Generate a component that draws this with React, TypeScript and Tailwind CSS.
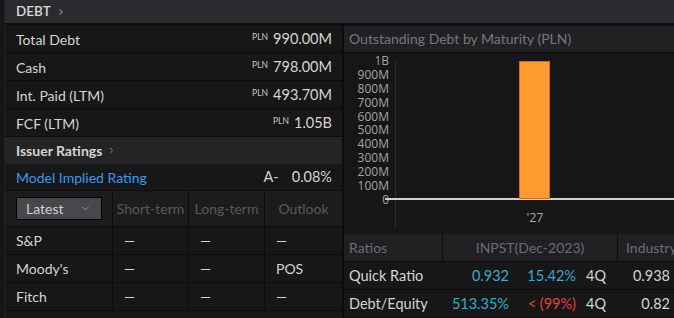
import { ChevronRight, ChevronDown } from 'lucide-react';

const font = { fontFamily: 'Lato, "Open Sans", sans-serif' };

const summary = [
  { label: 'Total Debt', value: '990.00M' },
  { label: 'Cash', value: '798.00M' },
  { label: 'Int. Paid (LTM)', value: '493.70M' },
  { label: 'FCF (LTM)', value: '1.05B' },
];

const ratings = [
  { agency: 'S&P', short: '—', long: '—', outlook: '—' },
  { agency: "Moody's", short: '—', long: '—', outlook: 'POS' },
  { agency: 'Fitch', short: '—', long: '—', outlook: '—' },
];

const ticks = ['1B', '900M', '800M', '700M', '600M', '500M', '400M', '300M', '200M', '100M', '0'];

export default function App() {
  return (
    <div
      className="w-[674px] h-[318px] overflow-hidden flex bg-[#0d0d0d] text-[#d4d4d4] text-[14px]"
      style={font}
    >
      {/* left rail */}
      <div className="w-[5px] flex-shrink-0 bg-[#161616] border-r border-[#222]" />

      <div className="flex-1 flex flex-col min-w-0">
        {/* Header */}
        <div className="h-[24px] flex-shrink-0 bg-[#2b2b2f] flex items-center pl-[11px] gap-[5px] border-b border-[#0d0d0d]">
          <span className="text-[13.5px] font-semibold text-[#d8d8d8]">DEBT</span>
          <ChevronRight size={10} className="text-[#9a9a9a]" strokeWidth={2.5} />
        </div>

        <div className="flex-1 flex gap-[2px] mt-px min-h-0">
          {/* Left panel */}
          <div className="w-[337px] flex-shrink-0 flex flex-col bg-[#171717]">
            {summary.map((r) => (
              <div
                key={r.label}
                className="h-[28px] flex items-center justify-between pl-[11px] pr-[10px] border-b border-[#0d0d0d] pt-px"
              >
                <span>{r.label}</span>
                <span className="flex items-baseline gap-[5px]">
                  <span className="text-[8.5px] text-[#c8c8c8] relative top-[-4px]">PLN</span>
                  <span className="text-[14.5px]">{r.value}</span>
                </span>
              </div>
            ))}

            <div className="h-[27px] flex items-center pl-[11px] gap-[5px] bg-[#242427]">
              <span className="font-bold text-[14px] text-[#d4d4d4]">Issuer Ratings</span>
              <ChevronRight size={9} className="text-[#8a8a8a]" strokeWidth={2.5} />
            </div>

            <div className="h-[27px] flex items-center justify-between pl-[11px] pr-[10px] border-b border-[#0d0d0d]">
              <span className="text-[#3d98ea]">Model Implied Rating</span>
              <span className="flex gap-[13px] text-[14.5px]">
                <span>A-</span>
                <span>0.08%</span>
              </span>
            </div>

            {/* ratings table */}
            <div className="grid grid-cols-[108px_76px_76px_1fr] content-start flex-1">
              <div className="h-[36px] bg-[#1c1c1c] flex items-center pl-[11px] border-r border-b border-[#0d0d0d]">
                <div className="w-[86px] h-[23px] bg-[#47474c] border border-black flex items-center justify-between pl-[9px] pr-[10px] text-[#cfcfcf]">
                  <span>Latest</span>
                  <ChevronDown size={11} className="text-[#9c9c9c]" />
                </div>
              </div>
              {['Short-term', 'Long-term', 'Outlook'].map((h, i) => (
                <div
                  key={h}
                  className={`h-[36px] bg-[#1c1c1c] flex items-center justify-center text-[#58585d] border-b border-[#0d0d0d] ${
                    i < 2 ? 'border-r' : ''
                  }`}
                >
                  {h}
                </div>
              ))}
              {ratings.map((r) => (
                <div key={r.agency} className="contents">
                  <div className="h-[28px] flex items-center pl-[11px] border-r border-b border-[#0d0d0d]">
                    {r.agency}
                  </div>
                  <div className="h-[28px] flex items-center pl-[11px] border-r border-b border-[#0d0d0d]">
                    {r.short}
                  </div>
                  <div className="h-[28px] flex items-center pl-[11px] border-r border-b border-[#0d0d0d]">
                    {r.long}
                  </div>
                  <div className="h-[28px] flex items-center pl-[11px] border-b border-[#0d0d0d]">
                    {r.outlook}
                  </div>
                </div>
              ))}
            </div>
          </div>

          {/* Right panel */}
          <div className="flex-1 flex flex-col min-w-0">
            <div className="h-[27px] mt-px flex items-center pl-[5px] bg-[#212124] text-[#76767c] text-[14px] whitespace-nowrap border-b border-[#0d0d0d]">
              Outstanding Debt by Maturity (PLN)
            </div>

            {/* chart */}
            <div className="h-[182px] bg-[#161616] relative" style={{ fontFamily: '"Open Sans", sans-serif' }}>
              <div className="absolute left-0 top-[1px] w-[45px] flex flex-col items-end text-[12px] leading-[13.9px] text-[#a4a4a4]">
                {ticks.map((t) => (
                  <span key={t}>{t}</span>
                ))}
              </div>
              <div className="absolute left-[51px] top-[8px] w-px h-[168px] bg-[#2a2a2a]" />
              <div className="absolute left-[41px] right-0 top-[145px] h-[2px] bg-[#cfcfcf]" />
              <div className="absolute left-[175px] top-[8px] w-[31px] h-[138px] bg-[#ff9b30] border border-[#c96f14]" />
              <div className="absolute left-[176px] w-[30px] top-[156px] text-center text-[12.5px] text-[#a8a8a8]">'27</div>
            </div>

            {/* ratios */}
            <div className="flex-1 bg-[#0d0d0d] flex flex-col">
              <div className="h-[28px] grid grid-cols-[99px_175px_1fr] bg-[#202023] text-[#6c6c72] border-b border-[#0d0d0d]">
                <div className="flex items-center pl-[5px] border-r border-[#0d0d0d]">Ratios</div>
                <div className="flex items-center justify-center border-r border-[#0d0d0d]">INPST(Dec-2023)</div>
                <div className="flex items-center pl-[8px] whitespace-nowrap overflow-hidden">Industry</div>
              </div>
              {[
                { name: 'Quick Ratio', val: '0.932', chg: '15.42%', neg: false, ind: '0.938' },
                { name: 'Debt/Equity', val: '513.35%', chg: '< (99%)', neg: true, ind: '0.82' },
              ].map((r) => (
                <div
                  key={r.name}
                  className="h-[28px] grid grid-cols-[99px_175px_1fr] bg-[#171717] border-b border-[#0d0d0d] text-[14.5px]"
                >
                  <div className="flex items-center pl-[5px] whitespace-nowrap">{r.name}</div>
                  <div className="flex items-center">
                    <span className="w-[66px] text-right text-[#3aa6d2]">{r.val}</span>
                    <span className={`w-[67px] text-right ${r.neg ? 'text-[#ee3b3b]' : 'text-[#3aa6d2]'}`}>{r.chg}</span>
                    <span className="ml-[10px]">4Q</span>
                  </div>
                  <div className="flex items-center justify-end pr-[4px]">{r.ind}</div>
                </div>
              ))}
            </div>
          </div>
        </div>
      </div>
    </div>
  );
}
